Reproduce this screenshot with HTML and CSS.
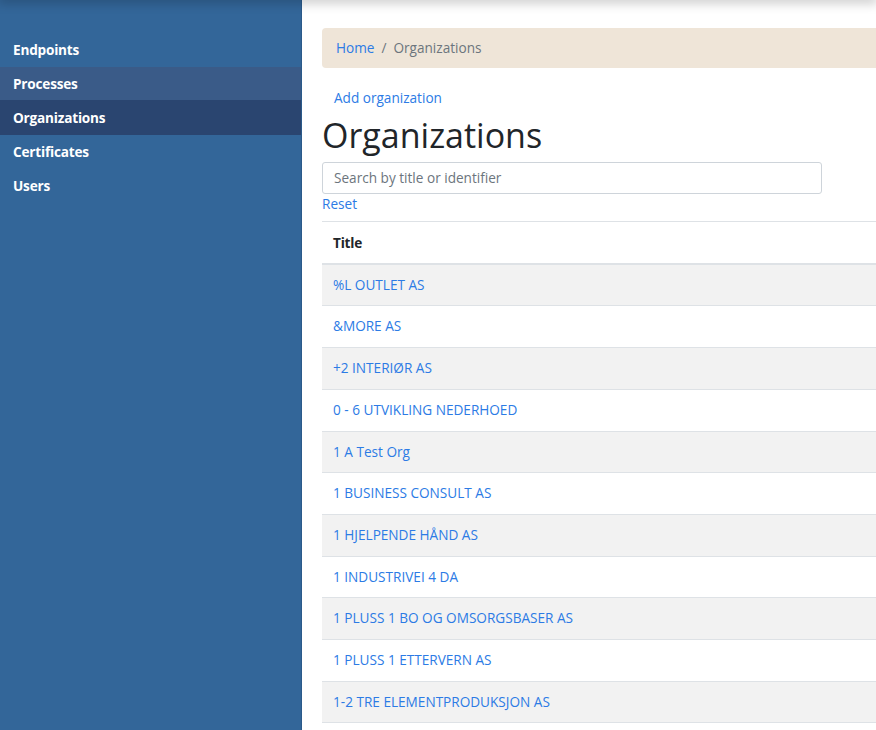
FILE: index.html
```html
<!DOCTYPE html>
<html lang="en">
<head>
<meta charset="utf-8">
<title>Organizations</title>
<link rel="stylesheet" href="styles.css">
</head>
<body>
<div class="topshadow"></div>
<div class="layout">
  <nav class="sidebar">
    <a class="nav-item first" href="#">Endpoints</a>
    <a class="nav-item hover" href="#">Processes</a>
    <a class="nav-item active" href="#">Organizations</a>
    <a class="nav-item" href="#">Certificates</a>
    <a class="nav-item last" href="#">Users</a>
  </nav>
  <main class="main">
    <div class="content">
      <div class="breadcrumb"><a href="#">Home</a><span class="sep">/</span><span class="current">Organizations</span></div>
      <div class="add-row"><a class="add-link" href="#">Add organization</a></div>
      <h1 class="title">Organizations</h1>
      <input class="search" type="text" placeholder="Search by title or identifier">
      <div class="reset-row"><a href="#">Reset</a></div>
      <table class="table">
        <thead><tr><th>Title</th></tr></thead>
        <tbody>
          <tr><td><a href="#">%L OUTLET AS</a></td></tr>
          <tr><td><a href="#">&amp;MORE AS</a></td></tr>
          <tr><td><a href="#">+2 INTERIØR AS</a></td></tr>
          <tr><td><a href="#">0 - 6 UTVIKLING NEDERHOED</a></td></tr>
          <tr><td><a href="#">1 A Test Org</a></td></tr>
          <tr><td><a href="#">1 BUSINESS CONSULT AS</a></td></tr>
          <tr><td><a href="#">1 HJELPENDE HÅND AS</a></td></tr>
          <tr><td><a href="#">1 INDUSTRIVEI 4 DA</a></td></tr>
          <tr><td><a href="#">1 PLUSS 1 BO OG OMSORGSBASER AS</a></td></tr>
          <tr><td><a href="#">1 PLUSS 1 ETTERVERN AS</a></td></tr>
          <tr><td><a href="#">1-2 TRE ELEMENTPRODUKSJON AS</a></td></tr>
        </tbody>
      </table>
    </div>
  </main>
</div>
</body>
</html>
```

FILE: styles.css
```css
html, body {
  margin: 0;
  padding: 0;
  height: 100%;
  overflow: hidden;
}
body {
  font-family: "Open Sans", "Liberation Sans", sans-serif;
  font-size: 13.6px;
  color: #212529;
  background: #fff;
}
a {
  color: #2c7be5;
  text-decoration: none;
}
.topshadow {
  position: fixed;
  top: -4px;
  left: 0;
  right: 0;
  height: 4px;
  box-shadow: 0 0 12px 2px rgba(0, 0, 0, 0.28);
  z-index: 10;
}
.layout {
  display: flex;
  height: 100%;
}
.sidebar {
  width: 301px;
  flex: 0 0 301px;
  background: #336699;
  border-right: 1px solid #2b5a8a;
  padding-top: 32px;
  display: flex;
  flex-direction: column;
}
.nav-item {
  display: block;
  color: #fff;
  font-weight: 700;
  font-size: 13.6px;
  line-height: 20px;
  padding: 7px 13px 6px;
  letter-spacing: -0.2px;
}
.nav-item.first {
  padding-top: 8px;
  padding-bottom: 7px;
}
.nav-item.hover {
  background: #3a5b88;
  padding-top: 7px;
  padding-bottom: 6px;
}
.nav-item.active {
  background: #2a4570;
  padding-top: 8px;
  padding-bottom: 7px;
}
.nav-item.last {
  padding-top: 8px;
}
.main {
  flex: 1;
  min-width: 0;
  overflow: hidden;
  padding: 28px 0 0 20px;
}
.content {
  width: 900px;
}
.breadcrumb {
  background: #efe5d8;
  border-radius: 4px;
  height: 40px;
  box-sizing: border-box;
  padding: 0 14px 2px;
  display: flex;
  align-items: center;
  color: #6c757d;
  line-height: 21px;
}
.breadcrumb .sep {
  padding: 0 7px;
  color: #6c757d;
}
.add-row {
  margin: 19px 0 0 12px;
  line-height: 21px;
}
.title {
  margin: 7px 0 7px 0;
  font-size: 34px;
  font-weight: 400;
  line-height: 40px;
  color: #212529;
}
.search {
  display: block;
  box-sizing: border-box;
  width: 500px;
  height: 32px;
  border: 1px solid #ced4da;
  border-radius: 3px;
  padding: 0 11px 2px;
  font-family: "Open Sans", "Liberation Sans", sans-serif;
  font-size: 13.6px;
  color: #495057;
  outline: none;
}
.search::placeholder {
  color: #6c757d;
}
.reset-row {
  line-height: 20px;
}
.table {
  width: 100%;
  border-collapse: collapse;
  margin-top: 7px;
}
.table th {
  text-align: left;
  font-weight: 700;
  padding: 11px 11px 9px;
  line-height: 20.7px;
  border-top: 1px solid #dee2e6;
  border-bottom: 2px solid #dee2e6;
  color: #212529;
  letter-spacing: -0.2px;
}
.table td {
  padding: 10px 11px;
  line-height: 20.7px;
  border-bottom: 1px solid #dee2e6;
}
.table tbody tr:nth-child(odd) td {
  background: #f2f2f2;
}
```
